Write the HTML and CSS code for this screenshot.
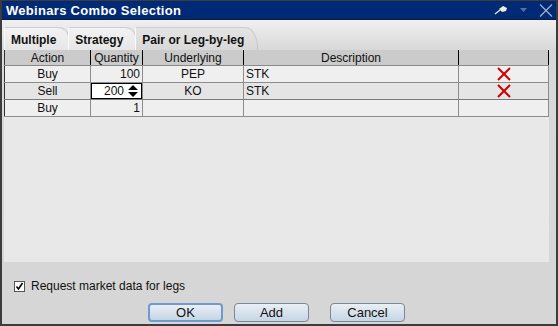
FILE: index.html
```html
<!DOCTYPE html>
<html lang="en">

<head>
    <meta charset="UTF-8">
    <title>Webinars Combo Selection</title>
    <link rel="stylesheet" href="styles.css">
</head>

<body>

    <div class="window">

        <div class="titlebar">
            <span class="title">Webinars Combo Selection</span>
            <div class="title-icons">
                <svg class="pin" width="14" height="10" viewBox="0 0 14 10">
                    <path d="M1 9 L6 5" stroke="#e8e4d0" stroke-width="1.5" />
                    <path d="M5 4 L9 1 L13 3 L12 6 L8 7 Z" fill="#f2eedc" />
                </svg>
                <svg class="menu" width="7" height="4" viewBox="0 0 7 4">
                    <path d="M0 0 H7 L3.5 4 Z" fill="#5b6f9e" />
                </svg>
                <svg class="close" width="14" height="13" viewBox="0 0 14 13">
                    <path d="M1 0.5 L13 12.5 M13 0.5 L1 12.5" stroke="#a4b0c6" stroke-width="1.2" />
                </svg>
            </div>
        </div>

        <div class="content">

            <div class="tabs">
                <div class="tab">Multiple</div>
                <div class="tab">Strategy</div>
                <div class="tab active">Pair or Leg-by-leg</div>
            </div>

            <div class="grid-area">
                <table class="legs">
                    <colgroup>
                        <col style="width: 86px">
                        <col style="width: 52px">
                        <col style="width: 101px">
                        <col style="width: 215px">
                        <col style="width: 90px">
                    </colgroup>
                    <thead>
                        <tr>
                            <th>Action</th>
                            <th>Quantity</th>
                            <th>Underlying</th>
                            <th>Description</th>
                            <th></th>
                        </tr>
                    </thead>
                    <tbody>
                        <tr>
                            <td class="c">Buy</td>
                            <td class="r">100</td>
                            <td class="c">PEP</td>
                            <td class="l">STK</td>
                            <td class="c"><svg class="del" width="14" height="14" viewBox="0 0 14 14"><path d="M1 1 L13 13 M13 1 L1 13" stroke="#d00000" stroke-width="2" /></svg></td>
                        </tr>
                        <tr class="selected">
                            <td class="c">Sell</td>
                            <td class="spin-cell">
                                <div class="spinner">
                                    <span>200</span>
                                    <svg width="10" height="14" viewBox="0 0 10 14">
                                        <path d="M0 6 L5 1 L10 6 Z M0 8 L5 13 L10 8 Z" fill="#000" />
                                    </svg>
                                </div>
                            </td>
                            <td class="c">KO</td>
                            <td class="l">STK</td>
                            <td class="c"><svg class="del" width="14" height="14" viewBox="0 0 14 14"><path d="M1 1 L13 13 M13 1 L1 13" stroke="#d00000" stroke-width="2" /></svg></td>
                        </tr>
                        <tr>
                            <td class="c">Buy</td>
                            <td class="r">1</td>
                            <td></td>
                            <td></td>
                            <td></td>
                        </tr>
                    </tbody>
                </table>
            </div>

            <div class="footer">
                <label class="check">
                    <svg width="11" height="11" viewBox="0 0 11 11">
                        <rect x="0.5" y="0.5" width="10" height="10" fill="#fff" stroke="#555" />
                        <path d="M2.5 5.5 L4.5 8 L8.5 2" stroke="#000" stroke-width="1.6" fill="none" />
                    </svg>
                    Request market data for legs
                </label>
                <div class="buttons">
                    <button class="btn default">OK</button>
                    <button class="btn">Add</button>
                    <button class="btn cancel">Cancel</button>
                </div>
            </div>

        </div>
    </div>

</body>

</html>
```

FILE: styles.css
```css
body {
    margin: 0;
    background-color: #3c3c3c;
    font-family: "Liberation Sans", Arial, sans-serif;
    font-size: 12px;
    color: #111;
}

.window {
    width: 558px;
    height: 326px;
    box-sizing: border-box;
    padding: 1px 2px 2px 2px;
    background-color: #3c3c3c;
    display: flex;
    flex-direction: column;
}

.titlebar {
    height: 18px;
    background-color: #002a76;
    border-bottom: 1px solid #0f1c3a;
    display: flex;
    align-items: center;
    justify-content: space-between;
    padding: 0 3px 0 4px;
}

.title {
    color: white;
    font-weight: bold;
    font-size: 13px;
    letter-spacing: 0.3px;
}

.title-icons {
    display: flex;
    align-items: center;
    gap: 12px;
}

.content {
    flex: 1;
    display: flex;
    flex-direction: column;
    padding: 0 7px 0 2px;
    background: linear-gradient(#f0f0f0, #d8d8d8 30px, #d6d6d6);
}

/* tabs */

.tabs {
    display: flex;
    margin-top: 7px;
    height: 23px;
}

.tab {
    font-weight: bold;
    font-size: 12px;
    padding: 5px 12px 0 6px;
    height: 17px;
    background: linear-gradient(#f2f2f2, #e6e6e6);
    border-top: 1px solid #cfcfcf;
    border-left: 1px solid #fafafa;
    border-top-right-radius: 10px;
    box-shadow: 1px 0 0 #c6c6c6;
}

.tab.active {
    background: linear-gradient(#e4e4e4, #d8d8d8);
    padding-right: 13px;
    border-top-right-radius: 12px 22px;
}

/* legs grid */

.grid-area {
    flex: 1;
    background-color: #e8e8e8;
}

.legs {
    table-layout: fixed;
    border-collapse: collapse;
    width: 545px;
    border-left: 1px solid #333;
}

.legs th {
    height: 15px;
    padding: 0;
    font-weight: normal;
    background-color: #cbcbcb;
    border-right: 1px solid #000;
    border-bottom: 1px solid #8a8a8a;
}

.legs td {
    height: 16px;
    padding: 0 2px;
    background-color: #efefef;
    border-right: 1px solid #8c8c8c;
    border-bottom: 1px solid #8c8c8c;
}

.legs td.c {
    text-align: center;
}

.legs td.r {
    text-align: right;
}

.legs td.l {
    text-align: left;
}

.legs tr.selected td {
    background-color: #e5e5e5;
    border-top: 1px solid #7a7a7a;
    border-bottom: 1px solid #7a7a7a;
}

.del {
    display: block;
    margin: 0 auto;
}

.legs td.spin-cell {
    padding: 0;
}

.spinner {
    height: 14px;
    background-color: white;
    border: 1px solid #000;
    display: flex;
    align-items: center;
    justify-content: flex-end;
    gap: 4px;
    padding-right: 3px;
}

/* footer */

.footer {
    height: 62px;
    box-sizing: border-box;
    padding-top: 17px;
}

.check {
    display: flex;
    align-items: center;
    gap: 6px;
    padding-left: 10px;
    font-size: 12px;
}

.buttons {
    display: flex;
    gap: 11px;
    margin-top: 10px;
    padding-left: 144px;
}

.btn {
    width: 75px;
    height: 19px;
    padding: 0;
    font-family: "Liberation Sans", Arial, sans-serif;
    font-size: 13px;
    color: #111;
    border: 1px solid #7b8796;
    border-radius: 4px;
    background: linear-gradient(#e9eff5, #c6d5e4);
}

.btn.default {
    border: 2px solid #6d9bd0;
}

.btn.cancel {
    margin-left: 10px;
}
```
